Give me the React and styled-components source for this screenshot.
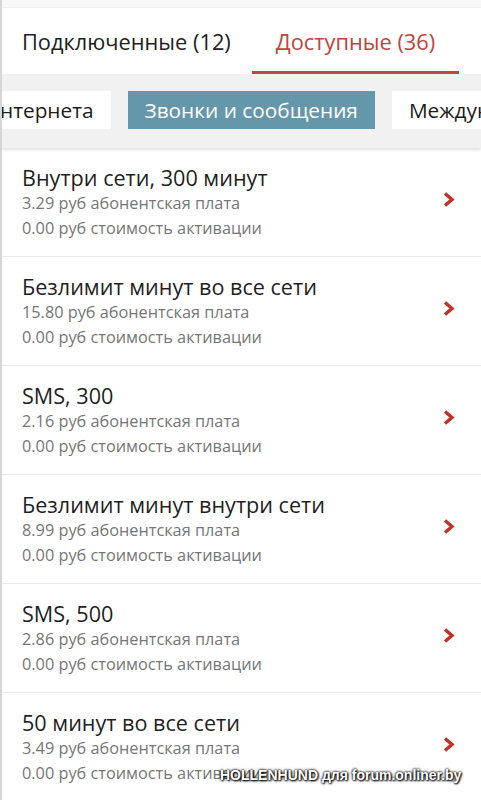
import React from 'react';
import styled, { createGlobalStyle } from 'styled-components';

const GlobalStyle = createGlobalStyle`
  html, body {
    margin: 0;
    padding: 0;
    background: #ffffff;
    font-family: "Open Sans", Roboto, sans-serif;
  }
`;

const Screen = styled.div`
  position: relative;
  width: 481px;
  height: 800px;
  overflow: hidden;
  box-sizing: border-box;
  border-left: 2px solid #d6d6d6;
  background: #fff;
`;

const TopStrip = styled.div`
  height: 7px;
  background: #f8f8f8;
  border-bottom: 1px solid #ececec;
`;

const Tabs = styled.div`
  display: flex;
  height: 66px;
  background: #fff;
`;

const Tab = styled.div`
  box-sizing: border-box;
  width: ${({ width }) => width}px;
  display: flex;
  align-items: center;
  justify-content: ${({ active }) => (active ? 'center' : 'flex-start')};
  padding-left: ${({ active }) => (active ? 0 : 20)}px;
  padding-top: 3px;
  font-size: 21.8px;
  white-space: nowrap;
  color: ${({ active }) => (active ? '#c1443a' : '#222')};
  border-bottom: 3px solid ${({ active }) => (active ? '#c8453b' : 'transparent')};
`;

const FilterBar = styled.div`
  display: flex;
  gap: 17px;
  height: 74px;
  box-sizing: border-box;
  padding-top: 17px;
  background: #f1f1f1;
  box-shadow: 0 2px 3px rgba(0, 0, 0, 0.12);
  white-space: nowrap;
  position: relative;
  z-index: 1;
`;

const Chip = styled.div`
  flex: none;
  height: 38px;
  box-sizing: border-box;
  display: flex;
  align-items: center;
  padding: 0 17px;
  font-size: 20.8px;
  background: ${({ active }) => (active ? '#6597ab' : '#fff')};
  color: ${({ active }) => (active ? '#fff' : '#1c1c1c')};
  margin-left: ${({ cut }) => (cut ? -19 : 0)}px;
`;

const List = styled.div`
  display: flex;
  flex-direction: column;
`;

const Item = styled.div`
  display: flex;
  align-items: center;
  height: 109px;
  box-sizing: border-box;
  padding: 0 26px 0 20px;
  border-bottom: 1px solid #e8e8e8;
`;

const Info = styled.div`
  flex: 1;
  padding-top: 1px;
`;

const Title = styled.div`
  font-size: 21.6px;
  line-height: 27px;
  color: #1f1f1f;
`;

const Sub = styled.div`
  font-size: 16.3px;
  line-height: 25px;
  color: #767676;
`;

const Chevron = styled.svg`
  width: 12px;
  height: 15px;
  margin-bottom: 6px;
  flex: none;
`;

const Watermark = styled.div`
  position: absolute;
  left: 218px;
  top: 767px;
  font-family: "Liberation Sans", sans-serif;
  font-weight: bold;
  font-size: 14px;
  white-space: nowrap;
  color: #fff;
  text-shadow: 0 0 3px #000, 0 0 2px #000, 1px 1px 2px #000;
`;

const plans = [
  ['Внутри сети, 300 минут', '3.29'],
  ['Безлимит минут во все сети', '15.80'],
  ['SMS, 300', '2.16'],
  ['Безлимит минут внутри сети', '8.99'],
  ['SMS, 500', '2.86'],
  ['50 минут во все сети', '3.49'],
];

export default function App() {
  return (
    <Screen>
      <GlobalStyle />
      <TopStrip />
      <Tabs>
        <Tab width={250}>Подключенные (12)</Tab>
        <Tab width={207} active>Доступные (36)</Tab>
      </Tabs>
      <FilterBar>
        <Chip cut>нтернета</Chip>
        <Chip active>Звонки и сообщения</Chip>
        <Chip>Международные</Chip>
      </FilterBar>
      <List>
        {plans.map(([name, price]) => (
          <Item key={name}>
            <Info>
              <Title>{name}</Title>
              <Sub>{price} руб абонентская плата</Sub>
              <Sub>0.00 руб стоимость активации</Sub>
            </Info>
            <Chevron viewBox="0 0 12 15">
              <path d="M2 1.5 L9 7.5 L2 13.5" fill="none" stroke="#c62f26" strokeWidth="3.4" />
            </Chevron>
          </Item>
        ))}
      </List>
      <Watermark>HOLLENHUND для forum.onliner.by</Watermark>
    </Screen>
  );
}
